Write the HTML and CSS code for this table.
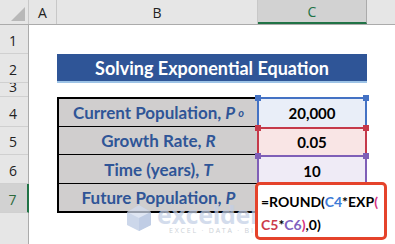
FILE: index.html
```html
<!DOCTYPE html>
<html>
<head>
<meta charset="utf-8">
<link rel="stylesheet" href="styles.css">
</head>
<body>
<div class="sheet">
  <div class="colheads">
    <div class="corner"><span class="tri"></span></div>
    <div class="colhead w-a">A</div>
    <div class="colhead w-b">B</div>
    <div class="colhead w-c sel">C</div>
    <div class="colhead rest"></div>
  </div>
  <div class="main">
    <div class="rowheads">
      <div class="rh h1">1</div>
      <div class="rh h2">2</div>
      <div class="rh h3">3</div>
      <div class="rh h4">4</div>
      <div class="rh h5">5</div>
      <div class="rh h6">6</div>
      <div class="rh h7 sel">7</div>
      <div class="rh hrest"></div>
    </div>
    <div class="body">
      <div class="title">Solving Exponential Equation</div>
      <div class="table">
        <div class="lab first">Current Population, <i>P</i><sub>o</sub></div>
        <div class="val blue"><span class="hd l"></span><span class="hd r"></span>20,000</div>
        <div class="lab">Growth Rate, <i>R</i></div>
        <div class="val red"><span class="hd l"></span><span class="hd r"></span>0.05</div>
        <div class="lab">Time (years), <i>T</i></div>
        <div class="val purple"><span class="hd l"></span><span class="hd r"></span>10</div>
        <div class="lab last">Future Population, <i>P</i></div>
        <div class="val plain"></div>
      </div>
      <div class="watermark">
        <svg class="wm-logo" width="26" height="28" viewBox="0 0 26 28">
          <polygon points="13,1 25,8 25,21 13,27 1,21 1,8" fill="#b9c8e3"/>
          <polygon points="13,1 25,8 13,14 1,8" fill="#d3ddef"/>
          <polygon points="13,14 25,8 25,21 13,27" fill="#a9bbdc"/>
        </svg>
        <div class="wm-text">
          <span class="wm-name">exceldemy</span>
          <span class="wm-tag">EXCEL · DATA · BI</span>
        </div>
      </div>
      <div class="formula">
        <div>=ROUND(<span class="f-blue">C4</span>*EXP<span class="f-mag">(</span></div>
        <div><span class="f-red">C5</span>*<span class="f-pur">C6</span><span class="f-mag">)</span>,0)</div>
      </div>
    </div>
  </div>
</div>
</body>
</html>
```
FILE: styles.css
```css
* { box-sizing: border-box; }
html, body { margin: 0; padding: 0; }
body { width: 395px; height: 244px; overflow: hidden; background: #fff; }

.sheet { width: 395px; height: 244px; display: flex; flex-direction: column; }

.colheads { display: flex; height: 25px; background: #e6e6e6; border-bottom: 1px solid #ababab; }
.corner { width: 29px; position: relative; border-right: 1px solid #c8c8c8; }
.tri { position: absolute; right: 3px; bottom: 3px; width: 0; height: 0;
  border-left: 14px solid transparent; border-bottom: 14px solid #b8b8b8; }
.colhead { display: flex; align-items: center; justify-content: center;
  font-family: "Open Sans", "Liberation Sans", sans-serif; font-size: 14px; color: #222;
  border-right: 1px solid #c8c8c8; padding-top: 1px; }
.w-a { width: 28px; }
.w-b { width: 201px; }
.w-c { width: 109px; }
.colhead.sel { background: #d2d2d2; color: #217346; border-bottom: 2px solid #217346; border-right: 1px solid #ababab; }
.colhead.rest { flex: 1; border-right: none; }

.main { flex: 1; display: flex; }
.rowheads { width: 29px; display: flex; flex-direction: column; background: #e6e6e6; border-right: 1px solid #ababab; }
.rh { display: flex; align-items: flex-end; justify-content: center; overflow: hidden;
  font-family: "Open Sans", "Liberation Sans", sans-serif; font-size: 14px; line-height: 16px; color: #222;
  border-bottom: 1px solid #d0d0d0; padding-bottom: 4px; padding-right: 2px; }
.h1 { height: 29px; }
.h2 { height: 29px; }
.h3 { height: 14px; padding-bottom: 0; align-items: flex-start; line-height: 8px; }
.h4 { height: 30px; }
.h5 { height: 28px; }
.h6 { height: 29px; }
.h7 { height: 29px; }
.rh.sel { background: #d2d2d2; color: #2d6a3c; border-right: 2px solid #217346; margin-right: -1px; }
.hrest { flex: 1; border-bottom: none; }

.body { flex: 1; position: relative; display: grid;
  grid-template-columns: 28px 201px 109px 1fr;
  grid-template-rows: 29px 29px 14px 116px 1fr; }

.title { grid-column: 2 / 4; grid-row: 2; background: #2f5597; border-bottom: 2px solid #9dc3e6;
  color: #fff; display: flex; align-items: center; justify-content: center;
  font-family: Lato, "Open Sans", sans-serif; font-weight: 700; font-size: 18px; padding-top: 1px; }

.table { grid-column: 2 / 4; grid-row: 4; display: grid;
  grid-template-columns: 201px 109px; grid-template-rows: 30px 28px 29px 29px; }
.lab { background: #d0cece; color: #2f5597; border-left: 2px solid #000; border-bottom: 1px solid #000;
  display: flex; align-items: center; justify-content: center;
  font-family: Lato, "Open Sans", sans-serif; font-weight: 700; font-size: 17px; white-space: nowrap; }
.lab i { margin-left: 4px; }
.lab sub { font-style: italic; font-size: 11px; vertical-align: -2px; margin-left: 3px; }
.lab.first { border-top: 2px solid #000; }
.lab.last { border-bottom: 2px solid #000; }
.val { position: relative; display: flex; align-items: center; justify-content: center;
  border-top: 2px solid; border-left: 2px solid; border-right: 2px solid; margin-left: -1px;
  font-family: Lato, "Open Sans", sans-serif; font-weight: 700; font-size: 15px; color: #000; }
.val.blue { background: #e9eef8; border-color: #4472c4; }
.val.red { background: #f9e5e5; border-color: #c5394a; }
.val.purple { background: #efebf6; border-color: #7f5fb7; }
.val.plain { background: #fff; border: none; }
.hd { position: absolute; top: -4px; width: 6px; height: 6px; }
.hd.l { left: -4px; }
.hd.r { right: -4px; }
.blue .hd { background: #4472c4; }
.red .hd { background: #c5394a; }
.purple .hd { background: #7f5fb7; }

.watermark { position: absolute; left: 97px; top: 177px; display: flex; align-items: flex-start; gap: 5px; opacity: 0.72; }
.wm-logo { margin-top: 2px; }
.wm-text { display: flex; flex-direction: column; }
.wm-name { font-family: "Open Sans", sans-serif; font-weight: 700; font-size: 25px; line-height: 24px; color: #c3cfe6; letter-spacing: -0.3px; }
.wm-tag { font-family: "Open Sans", sans-serif; font-size: 7px; line-height: 9px; letter-spacing: 1.8px; color: #b9bfc9; margin-left: 12px; }

.formula { position: absolute; left: 226px; top: 157px; width: 132px; height: 58px;
  background: #fff; border: 3px solid #e5432b; border-radius: 5px; padding: 5px 0 0 3px;
  font-family: Lato, "Open Sans", sans-serif; font-weight: 700; font-size: 14px; line-height: 23px; color: #000; white-space: nowrap; }
.f-blue { color: #3d7bd6; }
.f-mag { color: #d6317e; }
.f-red { color: #cc3a4b; }
.f-pur { color: #8060c0; }
```
